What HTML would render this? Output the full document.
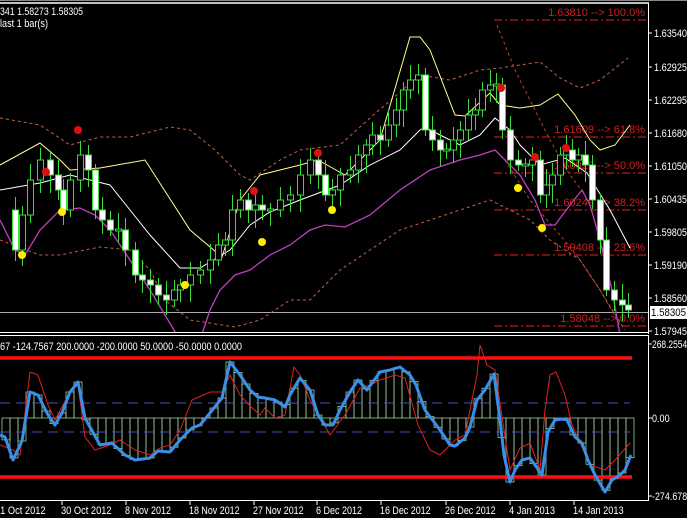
<!DOCTYPE html>
<html><head><meta charset="utf-8"><style>
html,body{margin:0;padding:0;background:#000;overflow:hidden}
svg{display:block}
text{font-family:"Liberation Sans",sans-serif;font-size:11px;fill:#fff}
</style></head><body>
<svg id="s" width="687" height="518" xmlns="http://www.w3.org/2000/svg">
<rect width="687" height="518" fill="#000"/>
<g id="g"></g>
<line x1="0" y1="3" x2="649" y2="3" stroke="#fff" stroke-width="1.5"/>
<line x1="0" y1="0.5" x2="687" y2="0.5" stroke="#888"/>
<line x1="648.5" y1="3" x2="648.5" y2="334" stroke="#fff"/>
<line x1="0" y1="332.5" x2="649" y2="332.5" stroke="#fff"/>
<line x1="0" y1="335.5" x2="649" y2="335.5" stroke="#fff"/>
<line x1="648.5" y1="335" x2="648.5" y2="500" stroke="#fff"/>
<line x1="0" y1="500.5" x2="649" y2="500.5" stroke="#fff"/>
<text x="0" y="15" textLength="83" lengthAdjust="spacingAndGlyphs">341 1.58273 1.58305</text>
<text x="0" y="27" textLength="48" lengthAdjust="spacingAndGlyphs">last 1 bar(s)</text>
<text x="0" y="350" textLength="242" lengthAdjust="spacingAndGlyphs">67 -124.7567 200.0000 -200.0000 50.0000 -50.0000 0.0000</text>
<g id="ax"></g>
<rect x="650" y="306" width="37" height="13" fill="#fff"/>
<text x="651" y="316" style="fill:#000" textLength="35" lengthAdjust="spacingAndGlyphs">1.58305</text>
</svg>
<script>
var NS="http://www.w3.org/2000/svg",g=document.getElementById('g'),ax=document.getElementById('ax');
function el(p,t,a,tx){var e=document.createElementNS(NS,t);for(var k in a)e.setAttribute(k,a[k]);if(tx)e.textContent=tx;p.appendChild(e);return e;}
function pl(pts,a){var d=pts.map(function(p,i){return (i?'L':'M')+p[0]+' '+p[1]}).join(' ');a.d=d;a.fill='none';return el(g,'path',a);}
function P(s){var a=s.split(/[\s,]+/).map(Number),r=[];for(var i=0;i<a.length;i+=2)r.push([a[i],a[i+1]]);return r;}
el(g,'clipPath',{id:'cm'});var cm=g.lastChild;el(cm,'rect',{x:0,y:4,width:648,height:328});
var mg=el(g,'g',{'clip-path':'url(#cm)'});
function mpl(s,a){var pts=P(s);a.d=pts.map(function(p,i){return (i?'L':'M')+p[0]+' '+p[1]}).join(' ');a.fill='none';return el(mg,'path',a);}
var fib=[[20,'1.63810 --> 100.0%'],[137,'1.61609 --> 61.8%'],[173,'1.60929 --> 50.0%'],[210,'1.60249 --> 38.2%'],[255,'1.59408 --> 23.6%'],[326,'1.58048 --> 0.0%']];
fib.forEach(function(f){el(mg,'line',{x1:494,y1:f[0],x2:648,y2:f[0],stroke:'#c01818','stroke-dasharray':'8 3 2 3','stroke-width':1.3});el(mg,'text',{x:645,y:f[0]-4,'text-anchor':'end',style:'fill:#d02020;font-size:11px'},f[1]);});
el(mg,'line',{x1:0,y1:312.5,x2:648,y2:312.5,stroke:'#aaa'});
var dz={stroke:'#c8604a','stroke-dasharray':'3 3','stroke-width':1};
mpl('0 118 40 125 70 145 100 137 130 137 170 127 190 130 215 150 240 175 250 180 280 160 300 150 340 145 370 118 420 75 450 80 480 70 500 68 540 62 560 78 580 88 600 80 628 58',dz);
mpl('0 240 40 255 60 255 100 247 130 250 150 270 165 300 190 320 235 327 260 320 290 300 310 300 340 270 370 250 400 230 430 220 460 210 490 200 510 210 530 220 550 240 580 260 600 290 625 330',dz);
mpl('497 25 515 70 535 110 550 140 570 175 585 195',{stroke:'#c04030','stroke-dasharray':'3 3'});
mpl('505 160 530 200 560 235 580 260 600 290 620 325',{stroke:'#c04030','stroke-dasharray':'3 3'});
mpl('0 165 40 143 60 160 70 170 100 168 145 160 190 230 222 257 240 200 260 175 280 170 300 165 318 160 345 175 380 140 410 37 420 37 430 50 455 115 465 116 490 93 500 105 520 108 540 105 558 94 575 115 590 140 600 150 615 145 630 125',{stroke:'#ffff99'});
mpl('0 190 40 183 70 175 90 180 110 185 150 235 180 268 200 268 230 250 250 225 270 212 300 200 340 185 370 165 400 150 420 130 425 127 440 135 460 145 480 135 495 118 510 130 520 145 540 165 565 158 587 173 610 210 630 248',{stroke:'#ffffff'});
mpl('0 220 15 250 25 255 40 230 60 210 80 208 95 215 110 230 130 260 150 290 165 315 180 340 200 340 210 310 220 290 235 275 250 270 270 255 290 245 310 230 325 225 345 227 370 215 400 190 430 170 460 160 480 155 495 150 505 160 520 175 535 200 545 225 555 225 570 205 582 190 590 205 600 240 612 290 620 335',{stroke:'#c040c0','stroke-width':1.3});
var cl=P('5 210 15 250 22 215 30 180 40 160 50 175 58 190 63 210 70 180 80 155 88 170 95 210 102 220 110 230 118 230 125 250 135 275 142 280 150 285 158 295 166 300 174 290 180 285 190 275 200 270 210 260 218 245 225 240 232 210 240 200 248 210 255 205 262 210 270 210 280 200 290 195 300 175 310 160 318 175 325 195 332 190 340 175 350 170 358 155 366 145 372 135 380 140 388 125 396 110 403 90 410 80 418 75 425 130 432 140 440 150 446 150 453 140 460 130 468 115 475 110 482 90 490 85 496 85 502 130 510 160 518 165 525 165 532 160 540 195 546 185 552 175 560 155 566 150 572 160 578 155 585 165 592 200 600 240 606 290 614 300 622 305 628 310');
for(var i=1;i<cl.length;i++){var x=cl[i][0],o=cl[i-1][1],c=cl[i][1];var t=Math.min(o,c),b=Math.max(o,c);if(b-t<2){t-=1;b+=1;}
var h=t-6-((i*7)%11),l=b+6+((i*5)%13);
el(mg,'line',{x1:x+0.5,y1:h,x2:x+0.5,y2:l,stroke:'#3cdc3c'});
el(mg,'rect',{x:x-2.5,y:t,width:6,height:b-t,fill:c>o?'#fff':'#000',stroke:'#3cdc3c'});}
P('78 130 46 172 254 191 318 153 501 88 535 157 566 148').forEach(function(p){el(mg,'circle',{cx:p[0],cy:p[1],r:4,fill:'#e01010'});});
P('22 255 62 212 185 285 262 242 332 210 518 188 542 228').forEach(function(p){el(mg,'circle',{cx:p[0],cy:p[1],r:4,fill:'#ffee00'});});
[['1.63540',33],['1.62925',67],['1.62295',100],['1.61680',133],['1.61050',166],['1.60435',199],['1.59805',232],['1.59190',265],['1.58560',298],['1.57945',331]].forEach(function(a){el(ax,'line',{x1:649,y1:a[1],x2:652,y2:a[1],stroke:'#fff'});el(ax,'text',{x:654,y:a[1]+4,textLength:33,lengthAdjust:'spacingAndGlyphs'},a[0]);});
[['268.2554',345],['0.00',419],['-274.678',497]].forEach(function(a){el(ax,'line',{x1:649,y1:a[1]-1,x2:652,y2:a[1]-1,stroke:'#fff'});el(ax,'text',{x:652,y:a[1]+3,textLength:a[0].length*4.4,lengthAdjust:'spacingAndGlyphs'},a[0]);});
[['21 Oct 2012',0],['30 Oct 2012',62],['8 Nov 2012',126],['18 Nov 2012',190],['27 Nov 2012',254],['6 Dec 2012',317],['16 Dec 2012',381],['26 Dec 2012',446],['4 Jan 2013',510],['14 Jan 2013',574]].forEach(function(a,i){var x=a[1];if(i>0)el(ax,'line',{x1:x,y1:500,x2:x,y2:505,stroke:'#fff'});el(ax,'text',{x:i?x-1:-5,y:514,textLength:a[0].length*4.6,lengthAdjust:'spacingAndGlyphs'},a[0]);});
var blue=P('0 435 5 437 13 460 22 441 30 392 38 395 48 415 55 425 62 413 70 392 78 382 85 418 100 445 112 443 125 455 135 460 150 458 158 451 170 452 180 440 192 428 200 425 210 413 222 398 230 362 240 375 250 390 258 397 265 398 275 400 285 407 290 395 300 378 310 390 318 415 325 425 333 425 340 410 350 392 358 380 367 390 380 372 390 370 400 367 410 375 416 385 425 410 440 430 450 445 455 446 465 438 470 427 477 400 485 390 494 374 500 420 504 455 510 482 515 470 522 460 530 458 535 465 542 475 548 432 555 420 562 419 567 420 575 437 582 443 588 460 595 475 605 492 612 480 620 475 625 470 631 455');
function yAt(x){for(var i=1;i<blue.length;i++)if(blue[i][0]>=x){var a=blue[i-1],b=blue[i];return a[1]+(b[1]-a[1])*(x-a[0])/(b[0]-a[0]);}return blue[blue.length-1][1];}
for(var x=2;x<630;x+=8){var y=yAt(x+4);el(g,'rect',{x:x,y:Math.min(418,y),width:8,height:Math.abs(y-418),fill:'none',stroke:'#9ccf9c','stroke-width':0.8});}
el(g,'line',{x1:0,y1:403,x2:630,y2:403,stroke:'#4050c0','stroke-dasharray':'10 6'});
el(g,'line',{x1:0,y1:432,x2:630,y2:432,stroke:'#4050c0','stroke-dasharray':'10 6'});
el(g,'line',{x1:0,y1:358,x2:632,y2:358,stroke:'#ff1010','stroke-width':3.5});
el(g,'line',{x1:0,y1:477,x2:632,y2:477,stroke:'#ff1010','stroke-width':3.5});
pl(P('0 445 13 450 20 455 30 372 38 375 48 405 55 420 70 392 78 385 85 437 95 450 110 445 120 440 135 450 150 455 160 448 170 445 180 430 192 400 210 392 222 392 230 375 240 395 250 406 260 415 265 408 275 418 285 415 294 367 300 375 310 400 330 435 345 415 360 388 370 385 380 380 395 375 405 378 418 425 430 450 440 455 455 440 465 435 477 375 480 345 487 365 495 370 510 470 520 448 530 443 540 470 545 410 550 375 556 372 565 395 572 425 590 465 605 470 615 460 630 443'),{stroke:'#e02020','stroke-width':1});
pl(blue,{stroke:'#3a8fe8','stroke-width':3,'stroke-linejoin':'round'});
</script>
</body></html>
